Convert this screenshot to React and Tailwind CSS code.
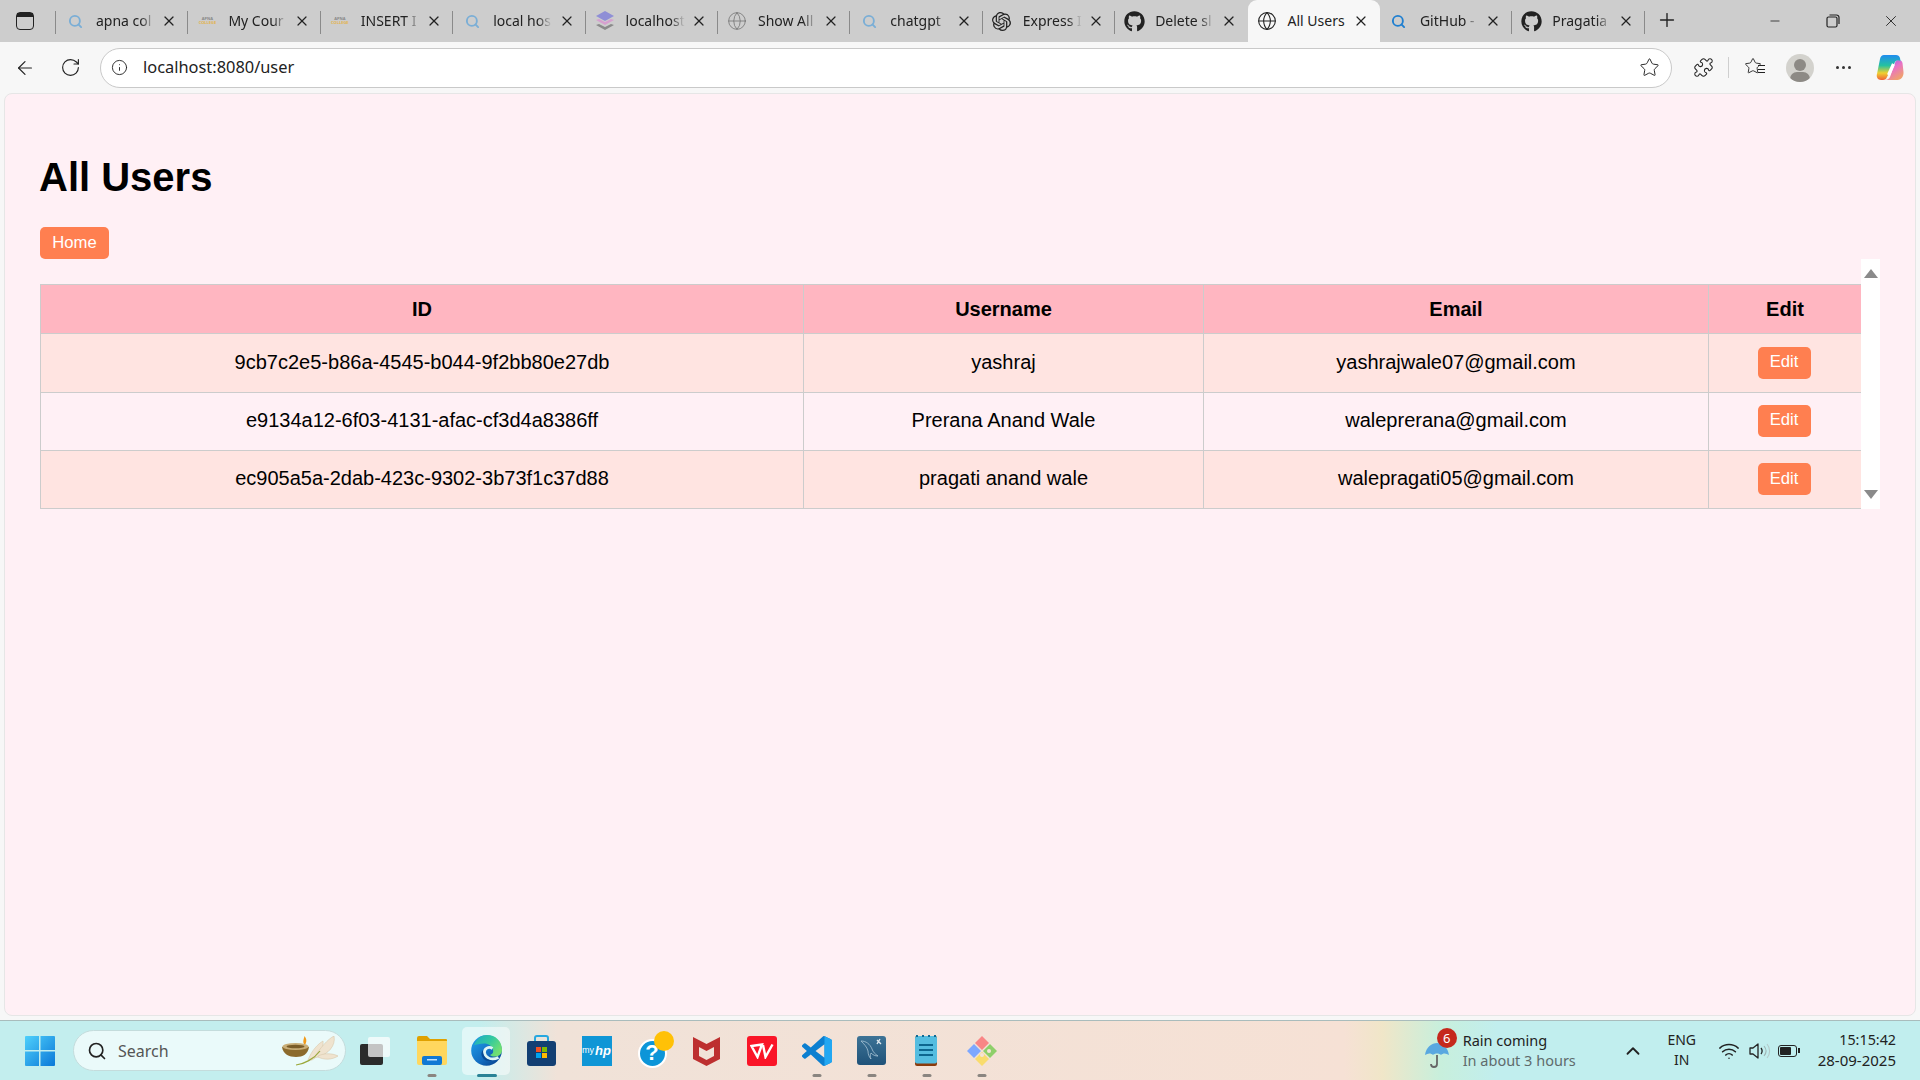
import React from "react";
import { FaGithub } from "react-icons/fa";
import { SiOpenai } from "react-icons/si";
import { Globe, Search, X, Plus, Minus, ArrowLeft, RotateCw, Info, Star, Puzzle, ChevronUp, Wifi } from "lucide-react";

const ui = { fontFamily: '"Noto Sans", "Open Sans", sans-serif' };

function Apna() {
  return (
    <span className="flex flex-col items-center w-[18px] leading-none">
      <span className="text-[4px] font-bold text-[#888]">APNA</span>
      <span className="text-[4px] font-bold text-[#e3b34c]">COLLEGE</span>
    </span>
  );
}

function Stack() {
  return (
    <svg width="20" height="22" viewBox="0 0 20 22">
      <path d="M10 1l9 5-9 5-9-5z" fill="#8f8fd6" />
      <path d="M1 10l9 5 9-5-3-1-6 3-6-3z" fill="#d6a0cf" />
      <path d="M1 15l9 5 9-5-3-1-6 3-6-3z" fill="#8a8a8a" />
    </svg>
  );
}

const mag = (c) => <Search size={15} strokeWidth={3} color={c} />;
const tabs = [
  { t: "apna col", i: mag("#7aaed6") },
  { t: "My Cour", i: <Apna /> },
  { t: "INSERT I", i: <Apna /> },
  { t: "local hos", i: mag("#7aaed6") },
  { t: "localhost", i: <Stack /> },
  { t: "Show All", i: <Globe size={20} strokeWidth={1} color="#777" /> },
  { t: "chatgpt", i: mag("#7aaed6") },
  { t: "Express I", i: <SiOpenai size={19} color="#222" /> },
  { t: "Delete sl", i: <FaGithub size={21} color="#222" /> },
  { t: "All Users", i: <Globe size={20} strokeWidth={1.3} color="#222" />, active: true },
  { t: "GitHub -", i: mag("#1f7fd0") },
  { t: "Pragatia", i: <FaGithub size={21} color="#222" /> },
];

function Tab({ t, i, active, last }) {
  return (
    <div className={`relative w-[132.4px] h-[42px] flex items-center shrink-0 ${active ? "bg-[#f7f7f7] rounded-t-[9px]" : ""}`}>
      <span className="w-[38px] flex justify-center shrink-0">{i}</span>
      <span className={`ml-[2px] -mt-[2px] text-[14px] whitespace-nowrap w-[62px] text-[#222] ${active ? "" : "[mask-image:linear-gradient(90deg,#000_72%,transparent_95%)]"}`}>{t}</span>
      <X size={16} strokeWidth={1.8} color="#222" className="absolute right-[11px] top-[13px]" />
      {!active && !last && <span className="absolute right-0 top-[11px] h-[23px] w-px bg-[#8a8a8a]" />}
    </div>
  );
}

function TabBar() {
  return (
    <div className="h-[42px] bg-[#cdcdcd] flex items-center shrink-0 text-[#222]">
      <div className="w-[56px] h-full flex items-center justify-center relative shrink-0">
        <span className="block w-[18px] h-[18px] ml-[-6px] rounded-[4px] border-[1.5px] border-[#222] relative">
          <span className="absolute left-0 right-0 top-0 h-[4px] bg-[#222]" />
        </span>
        <span className="absolute right-0 top-[11px] h-[23px] w-px bg-[#8a8a8a]" />
      </div>
      {tabs.slice(0, 9).map((x, n) => <Tab key={n} {...x} last={n === 8} />)}
      <Tab {...tabs[9]} />
      <Tab {...tabs[10]} />
      <Tab {...tabs[11]} />
      <Plus size={22} strokeWidth={1.5} color="#222" className="ml-[11px] -mt-[2px]" />
      <div className="ml-auto flex items-center">
        <button className="w-[58px] flex justify-center"><Minus size={14} strokeWidth={1.4} color="#222" /></button>
        <button className="w-[58px] flex justify-center">
          <svg width="14" height="14" viewBox="0 0 14 14" fill="none" stroke="#222" strokeWidth="1.2"><rect x="1" y="3" width="10" height="10" rx="1.5" /><path d="M3.5 1h7a2.5 2.5 0 012.5 2.5V10" /></svg>
        </button>
        <button className="w-[58px] flex justify-center"><X size={18} strokeWidth={1.2} color="#222" /></button>
      </div>
    </div>
  );
}

function Copilot() {
  return (
    <svg width="28" height="28" viewBox="0 0 28 28">
      <defs>
        <linearGradient id="cp1" x1="0" y1="0" x2="0" y2="1"><stop offset="0" stopColor="#1f8cf0" /><stop offset="0.42" stopColor="#25c2a0" /><stop offset="0.72" stopColor="#f0d030" /><stop offset="1" stopColor="#f0603a" /></linearGradient>
        <linearGradient id="cp2" x1="0" y1="0" x2="0.6" y2="1"><stop offset="0" stopColor="#6f6cf0" /><stop offset="0.5" stopColor="#e870c8" /><stop offset="1" stopColor="#f0a070" /></linearGradient>
      </defs>
      <path d="M22 6c3 0 4 1 4.500 3l1 9c.3 4-2 8-6 8H9c2 0 4-1 5-3l5-14c.5-2 1.500-3 3-3z" fill="url(#cp2)" />
      <path d="M8 1h12c2 0 3.500 1 4 3l.5 3c-3-1.500-5-.5-6 2L11 23c-.5 2-2 3-4 3H5c-3 0-5-3-4-6L4 5c.6-2.500 2-4 4-4z" fill="url(#cp1)" />
      <path d="M17.500 10L12.500 21" stroke="#fff" strokeWidth="3.200" />
    </svg>
  );
}

function Toolbar() {
  return (
    <div className="h-[51px] bg-[#f7f7f7] flex items-center shrink-0">
      <button className="w-[50px] flex justify-center"><ArrowLeft size={22} strokeWidth={1.3} color="#222" /></button>
      <button className="w-[41px] flex justify-center"><RotateCw size={21} strokeWidth={1.3} color="#222" /></button>
      <div className="ml-[9px] w-[1572px] h-[40px] bg-white border border-[#c9c9c9] rounded-[20px] flex items-center shrink-0">
        <Info size={17} strokeWidth={1.3} color="#222" className="ml-[10px]" />
        <span className="ml-[15px] text-[16.4px] text-[#222]">localhost:8080/user</span>
        <Star size={21} strokeWidth={1.1} color="#222" className="ml-auto mr-[11px]" />
      </div>
      <div className="flex items-center flex-1">
        <Puzzle size={21} strokeWidth={1.2} color="#222" className="ml-[21px]" />
        <span className="ml-[14px] w-px h-[21px] bg-[#cfcfcf]" />
        <span className="ml-[15px] relative w-[21px] h-[21px]">
          <Star size={18} strokeWidth={1.2} color="#222" className="absolute left-0 top-0" />
          <span className="absolute right-0 top-[8px] w-[7px] h-[8px] border-y border-[#222] bg-[linear-gradient(#0000_3px,#222_3px,#222_4px,#0000_4px)]" />
        </span>
        <span className="ml-[21px] w-[28px] h-[28px] rounded-full bg-[#d3d2cd] relative overflow-hidden">
          <span className="absolute left-[8px] top-[5px] w-[12px] h-[12px] rounded-full bg-[#8d8a85]" />
          <span className="absolute left-[4px] top-[18px] w-[20px] h-[14px] rounded-full bg-[#8d8a85]" />
        </span>
        <span className="ml-[22px] flex gap-[3px]"><i className="w-[3px] h-[3px] rounded-full bg-[#333]" /><i className="w-[3px] h-[3px] rounded-full bg-[#333]" /><i className="w-[3px] h-[3px] rounded-full bg-[#333]" /></span>
        <span className="ml-[25px]"><Copilot /></span>
      </div>
    </div>
  );
}

const rows = [
  ["9cb7c2e5-b86a-4545-b044-9f2bb80e27db", "yashraj", "yashrajwale07@gmail.com"],
  ["e9134a12-6f03-4131-afac-cf3d4a8386ff", "Prerana Anand Wale", "waleprerana@gmail.com"],
  ["ec905a5a-2dab-423c-9302-3b73f1c37d88", "pragati anand wale", "walepragati05@gmail.com"],
];

function Content() {
  const f = { fontFamily: '"Liberation Sans", Arial, sans-serif' };
  return (
    <div className="flex-1 mx-[4px] bg-[#fff0f5] border border-[#e6e6e6] rounded-[8px] pl-[35px] pt-[60px]" style={f}>
      <h1 className="text-[40px] font-bold leading-[46px] text-black -ml-[1px]">All Users</h1>
      <button className="mt-[27px] h-[32px] w-[69px] pb-[2px] rounded-[5px] bg-[#ff7f50] text-white text-[16.67px] flex items-center justify-center">Home</button>
      <div className="flex w-[1840px]">
        <div className="pt-[25px] w-[1821px]">
          <table className="w-[1821px] border-collapse table-fixed text-[20px] text-black text-center">
            <colgroup><col className="w-[763px]" /><col className="w-[400px]" /><col className="w-[505px]" /><col className="w-[153px]" /></colgroup>
            <thead>
              <tr className="bg-[#ffb6c1] h-[49px]">
                {["ID", "Username", "Email", "Edit"].map((h) => <th key={h} className="border border-[#cccccc] font-bold p-0">{h}</th>)}
              </tr>
            </thead>
            <tbody>
              {rows.map((r, i) => (
                <tr key={i} className={`${i % 2 === 0 ? "bg-[#ffe4e1]" : "bg-[#fff0f5]"} ${i === 1 ? "h-[58px]" : "h-[58.5px]"}`}>
                  {r.map((c) => <td key={c} className="border border-[#cccccc] p-0 pb-[2px]">{c}</td>)}
                  <td className="border border-[#cccccc] p-0 pr-[2px] pb-[1px]">
                    <button className="h-[32px] w-[53px] pb-[2px] rounded-[5px] bg-[#ff7f50] text-white text-[16.67px] inline-flex items-center justify-center align-middle">Edit</button>
                  </td>
                </tr>
              ))}
            </tbody>
          </table>
        </div>
        <div className="w-[19px] bg-white flex flex-col items-center justify-between py-[10px]">
          <span className="w-0 h-0 border-x-[7px] border-x-transparent border-b-[9px] border-b-[#8a8a8a]" />
          <span className="w-0 h-0 border-x-[7px] border-x-transparent border-t-[9px] border-t-[#8a8a8a]" />
        </div>
      </div>
    </div>
  );
}

function WinLogo() {
  return (
    <svg width="30" height="31" viewBox="0 0 30 31">
      <defs>
        <linearGradient id="w1" x1="0" y1="0" x2="1" y2="1"><stop offset="0" stopColor="#4fd0fb" /><stop offset="1" stopColor="#0a78d8" /></linearGradient>
      </defs>
      <path d="M1 1h13v14H0V2a1 1 0 011-1zM15.500 1H29a1 1 0 011 1v13H15.500zM0 16.500h14V31H1a1 1 0 01-1-1zM15.500 16.500H30V30a1 1 0 01-1 1H15.500z" fill="url(#w1)" />
    </svg>
  );
}

function Lamp() {
  return (
    <svg width="56" height="30" viewBox="0 0 56 30">
      <g fill="#efe3cf" stroke="#d8c8aa" strokeWidth="0.6">
        <path d="M26 24C30 14 36 8 41 5C42 12 37 20 30 24z" />
        <path d="M32 22C38 12 46 3 52 0C54 10 46 18 36 21z" />
        <path d="M36 20C42 17 50 17 56 20C50 24 42 24 36 21z" />
      </g>
      <path d="M14 29C22 28 32 23 38 15" fill="none" stroke="#9aa83a" strokeWidth="1.200" />
      <path d="M0 11c8-2 18-2 27 0-1 7-6 10-13 10S1 18 0 11z" fill="#8c6a2c" />
      <ellipse cx="13.500" cy="10.500" rx="13" ry="3.500" fill="#c9ae78" />
      <ellipse cx="13.500" cy="10.500" rx="9" ry="1.800" fill="#7a5c28" />
      <path d="M22 8c-1.500-3 0-5 .5-8 2 2.500 2.500 5 1 8z" fill="#f29a1a" />
    </svg>
  );
}

function Edge() {
  return (
    <svg width="31" height="31" viewBox="0 0 31 31">
      <defs>
        <linearGradient id="e1" x1="0" y1="0" x2="1" y2="0.6"><stop offset="0" stopColor="#1aa8c8" /><stop offset="0.55" stopColor="#33c9a0" /><stop offset="1" stopColor="#72e070" /></linearGradient>
        <linearGradient id="e2" x1="0" y1="0.2" x2="0.7" y2="1"><stop offset="0" stopColor="#1e9ae6" /><stop offset="0.6" stopColor="#1470c4" /><stop offset="1" stopColor="#0b4a98" /></linearGradient>
      </defs>
      <circle cx="15.500" cy="15.500" r="15.300" fill="url(#e2)" />
      <path d="M3 10C6 3 11 0 16 0c8.500 0 15 6 15 15 0 4-3 6.500-7 6.500-2 0-4-.5-5-1.500 3-1 3.500-3 3-5-.8-4-4.500-6.500-9-6.500-4 0-8 1-11 2z" fill="url(#e1)" />
      <path d="M21.500 13.500c-4-2.500-8.500 0-8 4.500.5 4.500 6.500 8 14 4.500" fill="none" stroke="#dff5f5" strokeWidth="2.800" />
      <path d="M12 15c-.5 5 3 10 9 10.500-4 1.500-8 0-10-4-1-2-.8-4.500 1-6.500z" fill="#0a4a94" />
    </svg>
  );
}

function Store() {
  return (
    <svg width="29" height="32" viewBox="0 0 29 32">
      <path d="M8 6V3a2 2 0 012-2h9a2 2 0 012 2v3" fill="none" stroke="#25a8e0" strokeWidth="2" />
      <rect x="0" y="6" width="29" height="25" rx="3" fill="#123f73" />
      <rect x="9" y="12" width="5" height="5" fill="#f25022" /><rect x="15" y="12" width="5" height="5" fill="#7fba00" /><rect x="9" y="18" width="5" height="5" fill="#00a4ef" /><rect x="15" y="18" width="5" height="5" fill="#ffb900" />
    </svg>
  );
}

function Folder() {
  return (
    <svg width="30" height="29" viewBox="0 0 30 29">
      <path d="M0 2a2 2 0 012-2h8l3 3h16a1 1 0 011 1v5H0z" fill="#e0a100" />
      <path d="M0 5h30v22a2 2 0 01-2 2H2a2 2 0 01-2-2z" fill="#ffd75e" />
      <rect x="5" y="20" width="20" height="9" rx="2" fill="#1078d4" />
      <rect x="10" y="23" width="10" height="1.500" fill="#bfe2ff" />
    </svg>
  );
}

function TaskView() {
  return (
    <span className="relative block w-[30px] h-[28px]">
      <span className="absolute left-0 bottom-0 w-[23px] h-[21px] rounded-[2px] bg-[#2b2b2b]" />
      <span className="absolute right-0 top-0 w-[22px] h-[20px] rounded-[2px] bg-[#ffffffb8]" />
    </span>
  );
}

function Help() {
  return (
    <span className="relative block w-[34px] h-[34px]">
      <span className="absolute left-[3px] bottom-0 w-[29px] h-[29px] rounded-full bg-[#0d95d8] border-[2px] border-white text-white font-bold text-[22px] leading-[24px] text-center" style={{ fontFamily: '"Liberation Sans", sans-serif' }}>?</span>
      <span className="absolute right-[-5px] top-[-3px] w-[20px] h-[20px] rounded-full bg-[#ffc107]" />
    </span>
  );
}

function McAfee() {
  return (
    <svg width="27" height="30" viewBox="0 0 27 30">
      <path d="M0 1l13.500 7L27 1v22l-13.500 7L0 23zM6 11v9l7.500 4 7.500-4v-9l-7.500 4z" fill="#bd2f2f" fillRule="evenodd" />
    </svg>
  );
}

function Wps() {
  return (
    <span className="w-[30px] h-[30px] rounded-[3px] bg-[#fa1528] flex items-center justify-center">
      <svg width="24" height="16" viewBox="0 0 24 16" fill="none" stroke="#fff" strokeWidth="2.400" strokeLinejoin="miter">
        <path d="M1.500 3L12 1.500 7.500 14z" />
        <path d="M13 2l2.500 12L22.500 1.500" />
      </svg>
    </span>
  );
}

function VSCode() {
  return (
    <svg width="30" height="30" viewBox="0 0 100 100">
      <path fillRule="evenodd" d="M70.900 99.300a6.200 6.200 0 004.900-.2l20.600-9.900a6.250 6.250 0 003.500-5.600V16.400a6.250 6.250 0 00-3.500-5.600L75.800.900a6.200 6.200 0 00-7.100 1.200L29.300 38.100 12.100 25a4.170 4.170 0 00-5.300.2l-5.500 5a4.170 4.170 0 000 6.200L16.200 50 1.300 63.600a4.170 4.170 0 000 6.200l5.500 5a4.170 4.170 0 005.300.2l17.200-13 39.400 36a6.200 6.200 0 002.200 1.300zM75 27.300L45.100 50 75 72.700z" fill="#0c7fd0" />
      <path d="M75 0.500L96.400 10.800a6.250 6.250 0 013.600 5.600v67.200a6.250 6.250 0 01-3.600 5.600L75 99.500z" fill="#22a7f2" />
    </svg>
  );
}

function Mysql() {
  return (
    <svg width="29" height="29" viewBox="0 0 29 29">
      <defs><linearGradient id="my" x1="0" y1="0" x2="0" y2="1"><stop offset="0" stopColor="#3d7396" /><stop offset="1" stopColor="#1f5279" /></linearGradient></defs>
      <rect width="29" height="29" rx="3" fill="url(#my)" />
      <path d="M4 5c5 0 9 3 11 8 1 3 3 5 6 7-3 0-5-1-7-3-1 2-1 4 0 6-2-2-3-5-3-8C10 11 7 8 4 5z" fill="none" stroke="#a9c4d6" strokeWidth="0.8" />
      <path d="M20 4l4 4M23 3l-3 5" stroke="#dfe8ee" strokeWidth="1.400" />
    </svg>
  );
}

function Notepad() {
  return (
    <svg width="23" height="31" viewBox="0 0 23 31">
      <rect y="1" width="22" height="30" rx="2" fill="#8a3a0c" />
      <rect y="1" width="22" height="27.500" rx="2" fill="#55bde0" />
      <path d="M2 2v-2M8 2v-2M14 2v-2M20 2v-2" stroke="#116a94" strokeWidth="2" />
      <path d="M4 10h14M4 15h14M4 20h14" stroke="#0d6790" strokeWidth="2" />
    </svg>
  );
}

function Git() {
  return (
    <svg width="32" height="32" viewBox="0 0 32 32">
      <path d="M16 1l7 7-7 7-7-7z" fill="#f98686" />
      <path d="M1 16l7-7 7 7-7 7z" fill="#7ea8ff" />
      <path d="M31 16l-7-7-7 7 7 7z" fill="#8ecf6a" />
      <path d="M16 31l7-7-7-7-7 7z" fill="#f9dc6e" />
      <circle cx="23" cy="16" r="2" fill="#f5e3d8" /><circle cx="16" cy="20" r="2" fill="#f5e3d8" />
    </svg>
  );
}

function Speaker() {
  return (
    <svg width="24" height="22" viewBox="0 0 24 22" fill="none">
      <path d="M2 8h3l5-4v14l-5-4H2z" stroke="#222" strokeWidth="1.300" strokeLinejoin="round" />
      <path d="M13 8c1.500 2 1.500 4 0 6" stroke="#222" strokeWidth="1.300" />
      <path d="M16 6c2.500 3 2.500 7 0 10" stroke="#9fb4b4" strokeWidth="1.100" />
      <path d="M19 4c3.500 4 3.500 10 0 14" stroke="#b4c8c8" strokeWidth="1.100" />
    </svg>
  );
}

const dash = "absolute bottom-[3px] left-1/2 -translate-x-1/2 w-[9px] h-[3px] rounded-full bg-[#8a8580]";

function Slot({ children, run, active }) {
  return (
    <div className="relative w-[55px] h-[59px] flex items-center justify-center shrink-0">
      {active && <span className="absolute left-[3px] right-[4px] top-[6px] bottom-[5px] rounded-[5px] bg-[#ffffff80]" />}
      <span className="relative">{children}</span>
      {run && !active && <span className={dash} />}
      {active && <span className="absolute bottom-[3px] left-1/2 -translate-x-1/2 w-[20px] h-[3px] rounded-full bg-[#2a8296]" />}
    </div>
  );
}

function Taskbar() {
  return (
    <div className="h-[60px] shrink-0 border-t border-[#a9bcbc] flex items-center bg-[linear-gradient(90deg,#c3eeee_0%,#c3eeee_25%,#f0e2d8_29%,#f6e1d5_70%,#f0e6c8_72%,#c8efdc_75%,#c1eeee_78%,#c1eeee_100%)]" style={ui}>
      <div className="ml-[25px] w-[30px] shrink-0"><WinLogo /></div>
      <div className="ml-[18px] w-[273px] h-[41px] rounded-full bg-[#eafafa] border border-[#c4dcdc] flex items-center shrink-0">
        <Search size={20} strokeWidth={2} color="#222" className="ml-[13px]" />
        <span className="ml-[11px] text-[16px] text-[#555]">Search</span>
        <span className="ml-auto mr-[7px]"><Lamp /></span>
      </div>
      <div className="ml-[1px] flex items-center">
        <Slot><TaskView /></Slot>
        <span className="w-[2px] shrink-0" />
        <Slot run><Folder /></Slot>
        <Slot active run><Edge /></Slot>
        <Slot><Store /></Slot>
        <Slot>
          <span className="w-[30px] h-[30px] bg-[#0f96d6] text-white flex items-center justify-center gap-[1px] leading-none" style={{ fontFamily: '"Liberation Sans", sans-serif' }}>
            <span className="text-[9px]">my</span><span className="text-[13px] italic font-bold">hp</span>
          </span>
        </Slot>
        <Slot><Help /></Slot>
        <Slot><McAfee /></Slot>
        <Slot><Wps /></Slot>
        <Slot run><VSCode /></Slot>
        <Slot run><Mysql /></Slot>
        <Slot run><Notepad /></Slot>
        <Slot run><Git /></Slot>
      </div>
      <div className="ml-auto flex items-center h-full">
        <div className="relative w-[39px] h-[40px]">
          <svg width="27" height="28" viewBox="0 0 27 28" className="absolute left-0 top-[10px]"><path d="M1 14C2 6 8 2 13 2s11 4 12 12c-3-2-6-2-8 0-2-2-6-2-8 0-2-2-5-2-8 0z" fill="#5aa8e0" /><path d="M13 14v9c0 4-6 4-6 0" fill="none" stroke="#666" strokeWidth="1.800" /></svg>
          <span className="absolute left-[13px] top-[-3px] w-[20px] h-[20px] rounded-full bg-[#c5281c] text-white text-[13px] leading-[20px] text-center">6</span>
        </div>
        <div className="flex flex-col text-[14.5px] leading-[20px] w-[159px] -mt-[2px]">
          <span className="text-[#222]">Rain coming</span>
          <span className="text-[#5f6b6c]">In about 3 hours</span>
        </div>
        <ChevronUp size={22} strokeWidth={2} color="#222" />
        <div className="ml-[14px] w-[48px] flex flex-col items-center text-[14px] leading-[20px] text-[#222] -mt-[1px]"><span>ENG</span><span>IN</span></div>
        <Wifi size={22} strokeWidth={1.7} color="#222" className="ml-[12px]" />
        <span className="ml-[8px] flex"><Speaker /></span>
        <span className="ml-[6px] w-[19px] h-[12px] rounded-[3px] border-[1.5px] border-[#222] p-[1px] relative">
          <span className="block w-[11px] h-full bg-[#222] rounded-[1px]" />
          <span className="absolute right-[-4px] top-[2px] w-[2px] h-[5px] bg-[#222]" />
        </span>
        <div className="ml-[21px] mr-[24px] flex flex-col items-end text-[14.3px] leading-[20px] text-[#222] -mt-[2px]"><span>15:15:42</span><span className="text-[15px]">28-09-2025</span></div>
      </div>
    </div>
  );
}

export default function App() {
  return (
    <div className="h-screen w-full flex flex-col bg-[#f7f7f7] overflow-hidden" style={ui}>
      <TabBar />
      <Toolbar />
      <Content />
      <div className="h-[4px] shrink-0" />
      <Taskbar />
    </div>
  );
}
